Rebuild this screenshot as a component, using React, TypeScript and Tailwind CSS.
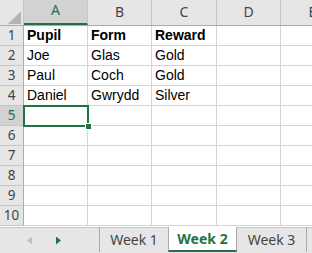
import React from 'react';

const cols = ['A', 'B', 'C', 'D', 'E'];
const colW = ['w-[64px]', 'w-[64px]', 'w-[65px]', 'w-[64px]', 'w-[64px]'];

const data: string[][] = [
  ['Pupil', 'Form', 'Reward'],
  ['Joe', 'Glas', 'Gold'],
  ['Paul', 'Coch', 'Gold'],
  ['Daniel', 'Gwrydd', 'Silver'],
];

export default function App() {
  const rows = Array.from({ length: 10 }, (_, i) => i + 1);

  return (
    <div className="w-[312px] h-[253px] overflow-hidden bg-white flex flex-col select-none">
      {/* Grid */}
      <div className="relative flex-1 bg-white overflow-hidden">
        {/* Column headers */}
        <div className="flex h-[26px] w-max bg-[#e6e6e6] border-b border-[#ababab]">
          <div className="relative shrink-0 w-[24px] h-full border-r border-[#c6c6c6]">
            <div
              className="absolute left-[8px] top-[11px] w-[13px] h-[13px] bg-[#b4b4b4]"
              style={{ clipPath: 'polygon(100% 0, 100% 100%, 0 100%)' }}
            />
          </div>
          {cols.map((c, i) => (
            <div
              key={c}
              className={`${colW[i]} shrink-0 h-full flex items-end justify-center pb-[3px] text-[14px] font-['Noto_Sans',sans-serif] border-r border-[#c6c6c6] ${
                c === 'A'
                  ? 'bg-[#d2d2d2] text-[#217346] border-b-2 border-b-[#217346]'
                  : 'text-[#444]'
              }`}
            >
              {c}
            </div>
          ))}
        </div>

        {/* Rows */}
        {rows.map((r) => (
          <div key={r} className="flex h-[20px] w-max">
            <div
              className={`shrink-0 w-[24px] h-full flex items-center justify-center text-[13.5px] font-['Noto_Sans',sans-serif] border-b border-[#c6c6c6] ${
                r === 5
                  ? 'bg-[#d2d2d2] text-[#217346] border-r border-r-[#217346]'
                  : 'bg-[#e6e6e6] text-[#444] border-r border-r-[#ababab]'
              }`}
            >
              {r}
            </div>
            {cols.map((c, i) => (
              <div
                key={c}
                className={`${colW[i]} shrink-0 h-full flex items-end pl-[3px] pb-[2px] text-[14px] leading-[16px] text-black font-['Liberation_Sans',Arial,sans-serif] border-r border-b border-[#d4d4d4] ${
                  r === 1 ? 'font-bold' : ''
                }`}
              >
                {data[r - 1]?.[i] ?? ''}
              </div>
            ))}
          </div>
        ))}

        {/* Active cell A5 */}
        <div className="absolute left-[23px] top-[105px] w-[66px] h-[22px] border-2 border-[#217346]" />
        <div className="absolute left-[85px] top-[123px] w-[7px] h-[7px] bg-[#217346] border border-white" />
      </div>

      {/* Sheet tabs */}
      <div className="h-[26px] shrink-0 flex bg-[#e6e6e6] border-t border-[#c6c6c6] font-['Noto_Sans',sans-serif] text-[14px]">
        <div className="w-[99px] h-full flex items-center gap-[24px] pl-[27px]">
          <div
            className="w-[5px] h-[8px] bg-[#c0c0c0]"
            style={{ clipPath: 'polygon(100% 0, 100% 100%, 0 50%)' }}
          />
          <div
            className="w-[5px] h-[8px] bg-[#217346]"
            style={{ clipPath: 'polygon(0 0, 100% 50%, 0 100%)' }}
          />
        </div>
        <div className="w-[69px] h-full flex items-center justify-center text-[#444] border-l border-[#ababab] -mt-px">
          Week 1
        </div>
        <div className="w-[69px] h-full flex items-center justify-center bg-white text-[#217346] font-bold border-x border-[#ababab] border-b-2 border-b-[#217346] -mt-px">
          Week 2
        </div>
        <div className="w-[70px] h-full flex items-center justify-center text-[#444] border-r border-[#ababab] -mt-px">
          Week 3
        </div>
      </div>
    </div>
  );
}
